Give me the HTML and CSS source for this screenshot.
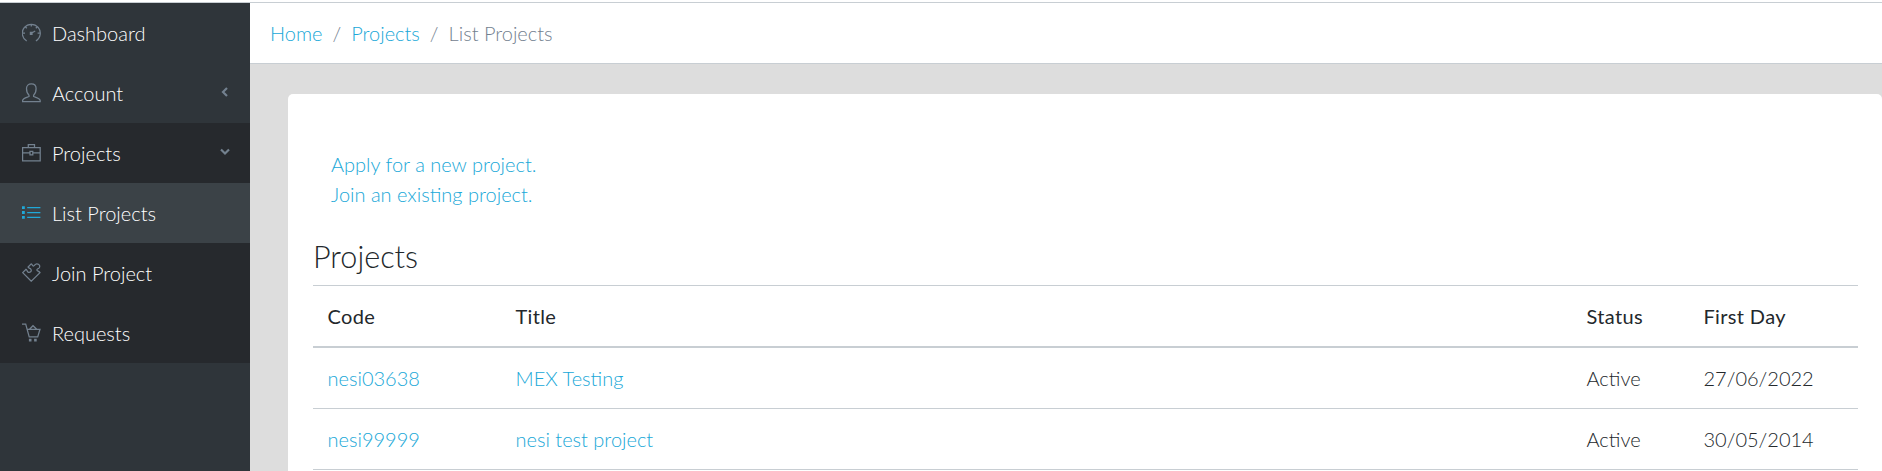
FILE: index.html
```html
<!DOCTYPE html>
<html lang="en">
<head>
<meta charset="utf-8">
<title>List Projects</title>
<link rel="stylesheet" href="styles.css">
</head>
<body>
<div class="app">
  <nav class="sidebar">
    <a class="nav-link"><svg class="icon" viewBox="0 0 20 20"><path d="M4.7 18A9 9 0 1 1 13.9 18M9.3 1.5v2M3.5 4l1.3 1.3M15.1 4l-1.3 1.3M1 10h2M15.6 10h2M8.4 10.8L13.2 8M8.4 9.3H10v2H8.4z"/></svg>Dashboard</a>
    <a class="nav-link"><svg class="icon" viewBox="0 0 20 20"><path d="M7 12.2C5.2 10.7 4.5 8.4 4.5 5.6C4.5 2.6 6.5.9 9.3.9s4.8 1.7 4.8 4.7c0 2.8-.7 5.1-2.5 6.6v1.3c2.2.9 6.6 1.6 6.6 4.2v.8H.6v-.8c0-2.6 4.2-3.3 6.4-4.2z"/></svg>Account<svg class="arrow" viewBox="0 0 10 10"><path d="M7 1L3 5l4 4"/></svg></a>
    <div class="group">
      <a class="nav-link"><svg class="icon" viewBox="0 0 20 20"><path d="M.6 4.5h17.6v13.4H.6zM6.3 4.3V1.6h6.2v2.7M.6 9.8H8M11 9.8h7.2M8 8.3h2.8v3.5H8z"/></svg>Projects<svg class="arrow down" viewBox="0 0 10 10"><path d="M1 2.5l4 4 4-4"/></svg></a>
      <a class="nav-link active"><svg class="icon" viewBox="0 0 20 20"><path d="M5.2 4.7h13.2M5.2 9.5h13.2M5.2 14.3h13.2"/><path class="dots" d="M0 3.3h2.8v2.8H0zM0 8.1h2.8v2.8H0zM0 12.9h2.8v2.8H0z"/></svg>List Projects</a>
      <a class="nav-link"><svg class="icon" viewBox="0 0 20 20"><path d="M9.3 18.2L.7 9.6l3.4-3.3c1 .2.7 2.4 2.3 3 1.8.5 3.3-1 2.7-2.7C8.5 5 6.2 5.2 6.1 4.1L9.2.9c1.2.2 1 2.1 2.2 2.1 1.3 0 1.3-2.2 3.4-2.2 2.6 0 3.8 2.7 2.1 4.3-1 .9-2.1.8-2 2 .1.9 2.3 1.1 3.1 2.5z"/></svg>Join Project</a>
      <a class="nav-link"><svg class="icon" viewBox="0 0 20 20"><path d="M0 1.1h3.7l3.5 12.8h8.5L18 6.3H5.1M7.5 6.3l3.5-3.6 3.7 3.6"/><path class="dots" d="M6.9 15.8h2.6v2.7H6.9zM12.1 15.8h2.6v2.7h-2.6z"/></svg>Requests</a>
    </div>
  </nav>
  <main class="main">
    <div class="breadcrumb"><a class="link">Home</a><span class="slash">/</span><a class="link">Projects</a><span class="slash">/</span><span>List Projects</span></div>
    <section class="card">
      <div class="actions"><a class="link">Apply for a new project.</a><a class="link">Join an existing project.</a></div>
      <h3 class="title">Projects</h3>
      <table class="table">
        <colgroup><col class="col-code"><col><col class="col-status"><col class="col-day"></colgroup>
        <thead><tr><th>Code</th><th>Title</th><th>Status</th><th>First Day</th></tr></thead>
        <tbody>
          <tr><td><a class="link">nesi03638</a></td><td><a class="link">MEX Testing</a></td><td>Active</td><td>27/06/2022</td></tr>
          <tr><td><a class="link">nesi99999</a></td><td><a class="link">nesi test project</a></td><td>Active</td><td>30/05/2014</td></tr>
        </tbody>
      </table>
    </section>
  </main>
</div>
</body>
</html>
```
FILE: styles.css
```css
* { box-sizing: border-box; }
body {
  margin: 0;
  height: 471px;
  overflow: hidden;
  padding-top: 2px;
  background: #fff;
  color: #23282c;
  font: 300 20px/30px Lato, sans-serif;
}
.app { display: flex; height: 469px; border-top: 1px solid #c8ced3; }
.sidebar { width: 250px; flex: none; background: #2f353a; color: #fff; }
.group { background: #26292d; }
.nav-link { display: flex; align-items: center; height: 60px; padding: 0 20px 0 22px; }
.active { background: #3b4247; }
.icon { width: 20px; height: 20px; margin-right: 10px; fill: none; stroke: #73818f; stroke-width: 1.25; }
.dots { fill: #73818f; stroke: none; }
.active .icon { stroke: #20a8d8; }
.active .dots { fill: #20a8d8; }
.arrow { width: 10px; height: 10px; margin: 0 0 2px auto; fill: none; stroke: #73818f; stroke-width: 2.2; }
.main { flex: 1; background: #ddd; }
.breadcrumb {
  display: flex;
  align-items: center;
  height: 61px;
  padding-left: 20px;
  background: #fff;
  border-bottom: 1px solid #c8ced3;
  color: #73818f;
}
.slash { margin: 0 10px; }
.link { color: #20a8d8; }
.card {
  height: 400px;
  margin: 30px 0 0 38px;
  padding: 55px 24px 0 25px;
  background: #fff;
  border-radius: 5px;
}
.actions { display: flex; flex-direction: column; padding-left: 18px; }
.title { margin: 29px 0 10px; font-size: 30.625px; line-height: 37px; font-weight: 300; }
.table { width: 100%; table-layout: fixed; border-collapse: separate; border-spacing: 0; }
.col-code { width: 188px; }
.col-status { width: 117px; }
.col-day { width: 169px; }
.table th, .table td { padding: 0 15px 0 14.5px; text-align: left; }
.table th { height: 63px; font-weight: 400; letter-spacing: .35px; border-top: 1px solid #c8ced3; border-bottom: 2px solid #c8ced3; }
.table td { height: 61px; border-bottom: 1px solid #c8ced3; }
```
